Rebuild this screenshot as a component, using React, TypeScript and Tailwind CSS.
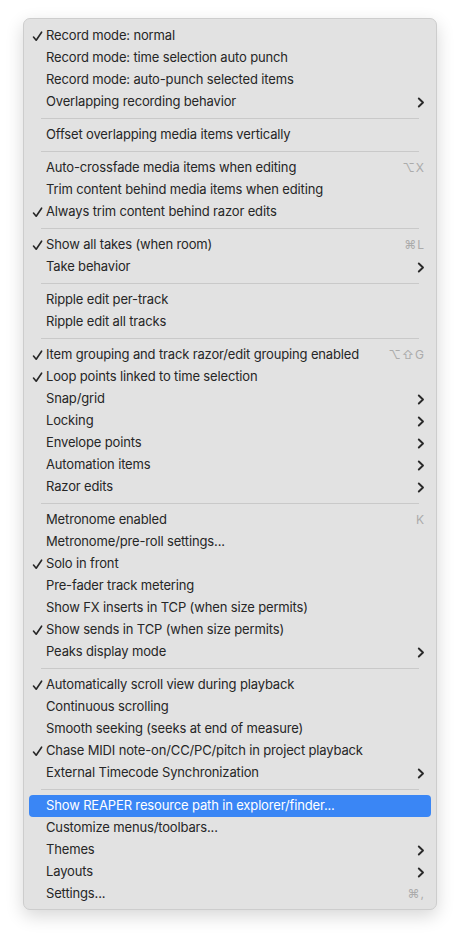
import React from 'react';

type Item =
  | { sep: true }
  | { label: string; checked?: boolean; sub?: boolean; shortcut?: string; active?: boolean };

const items: Item[] = [
  { label: 'Record mode: normal', checked: true },
  { label: 'Record mode: time selection auto punch' },
  { label: 'Record mode: auto-punch selected items' },
  { label: 'Overlapping recording behavior', sub: true },
  { sep: true },
  { label: 'Offset overlapping media items vertically' },
  { sep: true },
  { label: 'Auto-crossfade media items when editing', shortcut: '⌥X' },
  { label: 'Trim content behind media items when editing' },
  { label: 'Always trim content behind razor edits', checked: true },
  { sep: true },
  { label: 'Show all takes (when room)', checked: true, shortcut: '⌘L' },
  { label: 'Take behavior', sub: true },
  { sep: true },
  { label: 'Ripple edit per-track' },
  { label: 'Ripple edit all tracks' },
  { sep: true },
  { label: 'Item grouping and track razor/edit grouping enabled', checked: true, shortcut: '⌥⇧G' },
  { label: 'Loop points linked to time selection', checked: true },
  { label: 'Snap/grid', sub: true },
  { label: 'Locking', sub: true },
  { label: 'Envelope points', sub: true },
  { label: 'Automation items', sub: true },
  { label: 'Razor edits', sub: true },
  { sep: true },
  { label: 'Metronome enabled', shortcut: 'K' },
  { label: 'Metronome/pre-roll settings...' },
  { label: 'Solo in front', checked: true },
  { label: 'Pre-fader track metering' },
  { label: 'Show FX inserts in TCP (when size permits)' },
  { label: 'Show sends in TCP (when size permits)', checked: true },
  { label: 'Peaks display mode', sub: true },
  { sep: true },
  { label: 'Automatically scroll view during playback', checked: true },
  { label: 'Continuous scrolling' },
  { label: 'Smooth seeking (seeks at end of measure)' },
  { label: 'Chase MIDI note-on/CC/PC/pitch in project playback', checked: true },
  { label: 'External Timecode Synchronization', sub: true },
  { sep: true },
  { label: 'Show REAPER resource path in explorer/finder...', active: true },
  { label: 'Customize menus/toolbars...' },
  { label: 'Themes', sub: true },
  { label: 'Layouts', sub: true },
  { label: 'Settings...', shortcut: '⌘,' },
];

const Chevron: React.FC = () => (
  <svg width="8" height="11" viewBox="0 0 8 11" fill="none">
    <path d="M1.8 1.5 L6 5.5 L1.8 9.5" stroke="#2a2a2a" strokeWidth={1.9} strokeLinecap="round" strokeLinejoin="round" />
  </svg>
);

const Check: React.FC<{ light?: boolean }> = ({ light }) => (
  <svg width="11" height="11" viewBox="0 0 11 11" fill="none">
    <path d="M1.5 6 L4.2 9.2 L9.6 1.2" stroke={light ? '#fff' : '#262626'} strokeWidth={1.6} strokeLinecap="round" strokeLinejoin="round" />
  </svg>
);

const App: React.FC = () => {
  return (
    <div className="w-[460px] h-[936px] bg-white pt-[18px] pl-[23px]" style={{ fontFamily: 'Inter, "Liberation Sans", sans-serif' }}>
      <div className="w-[414px] rounded-[7px] bg-[#e2e2e2] border border-[#cdcdcd] shadow-[0_6px_18px_rgba(0,0,0,0.16)] pt-[6px] pb-[4px] px-[5px]">
        {items.map((it, i) =>
          'sep' in it ? (
            <div key={i} className="px-[12px] py-[5px]">
              <div className="h-px bg-[#c9c9c9]" />
            </div>
          ) : (
            <div
              key={i}
              className={`h-[22px] flex items-center rounded-[4px] pr-[6px] text-[13px] tracking-[-0.15px] ${
                it.active ? 'bg-[#3a86f5] text-white' : 'text-[#262626]'
              }`}
            >
              <div className="w-[17px] pl-[3px] flex items-center">{it.checked && <Check light={it.active} />}</div>
              <span className="flex-1 whitespace-nowrap">{it.label}</span>
              {it.shortcut && (
                <span className="text-[12px] text-[#ababab] tracking-[1px]">{it.shortcut}</span>
              )}
              {it.sub && (
                <span className="flex items-center">
                  <Chevron />
                </span>
              )}
            </div>
          )
        )}
      </div>
    </div>
  );
};

export default App;
